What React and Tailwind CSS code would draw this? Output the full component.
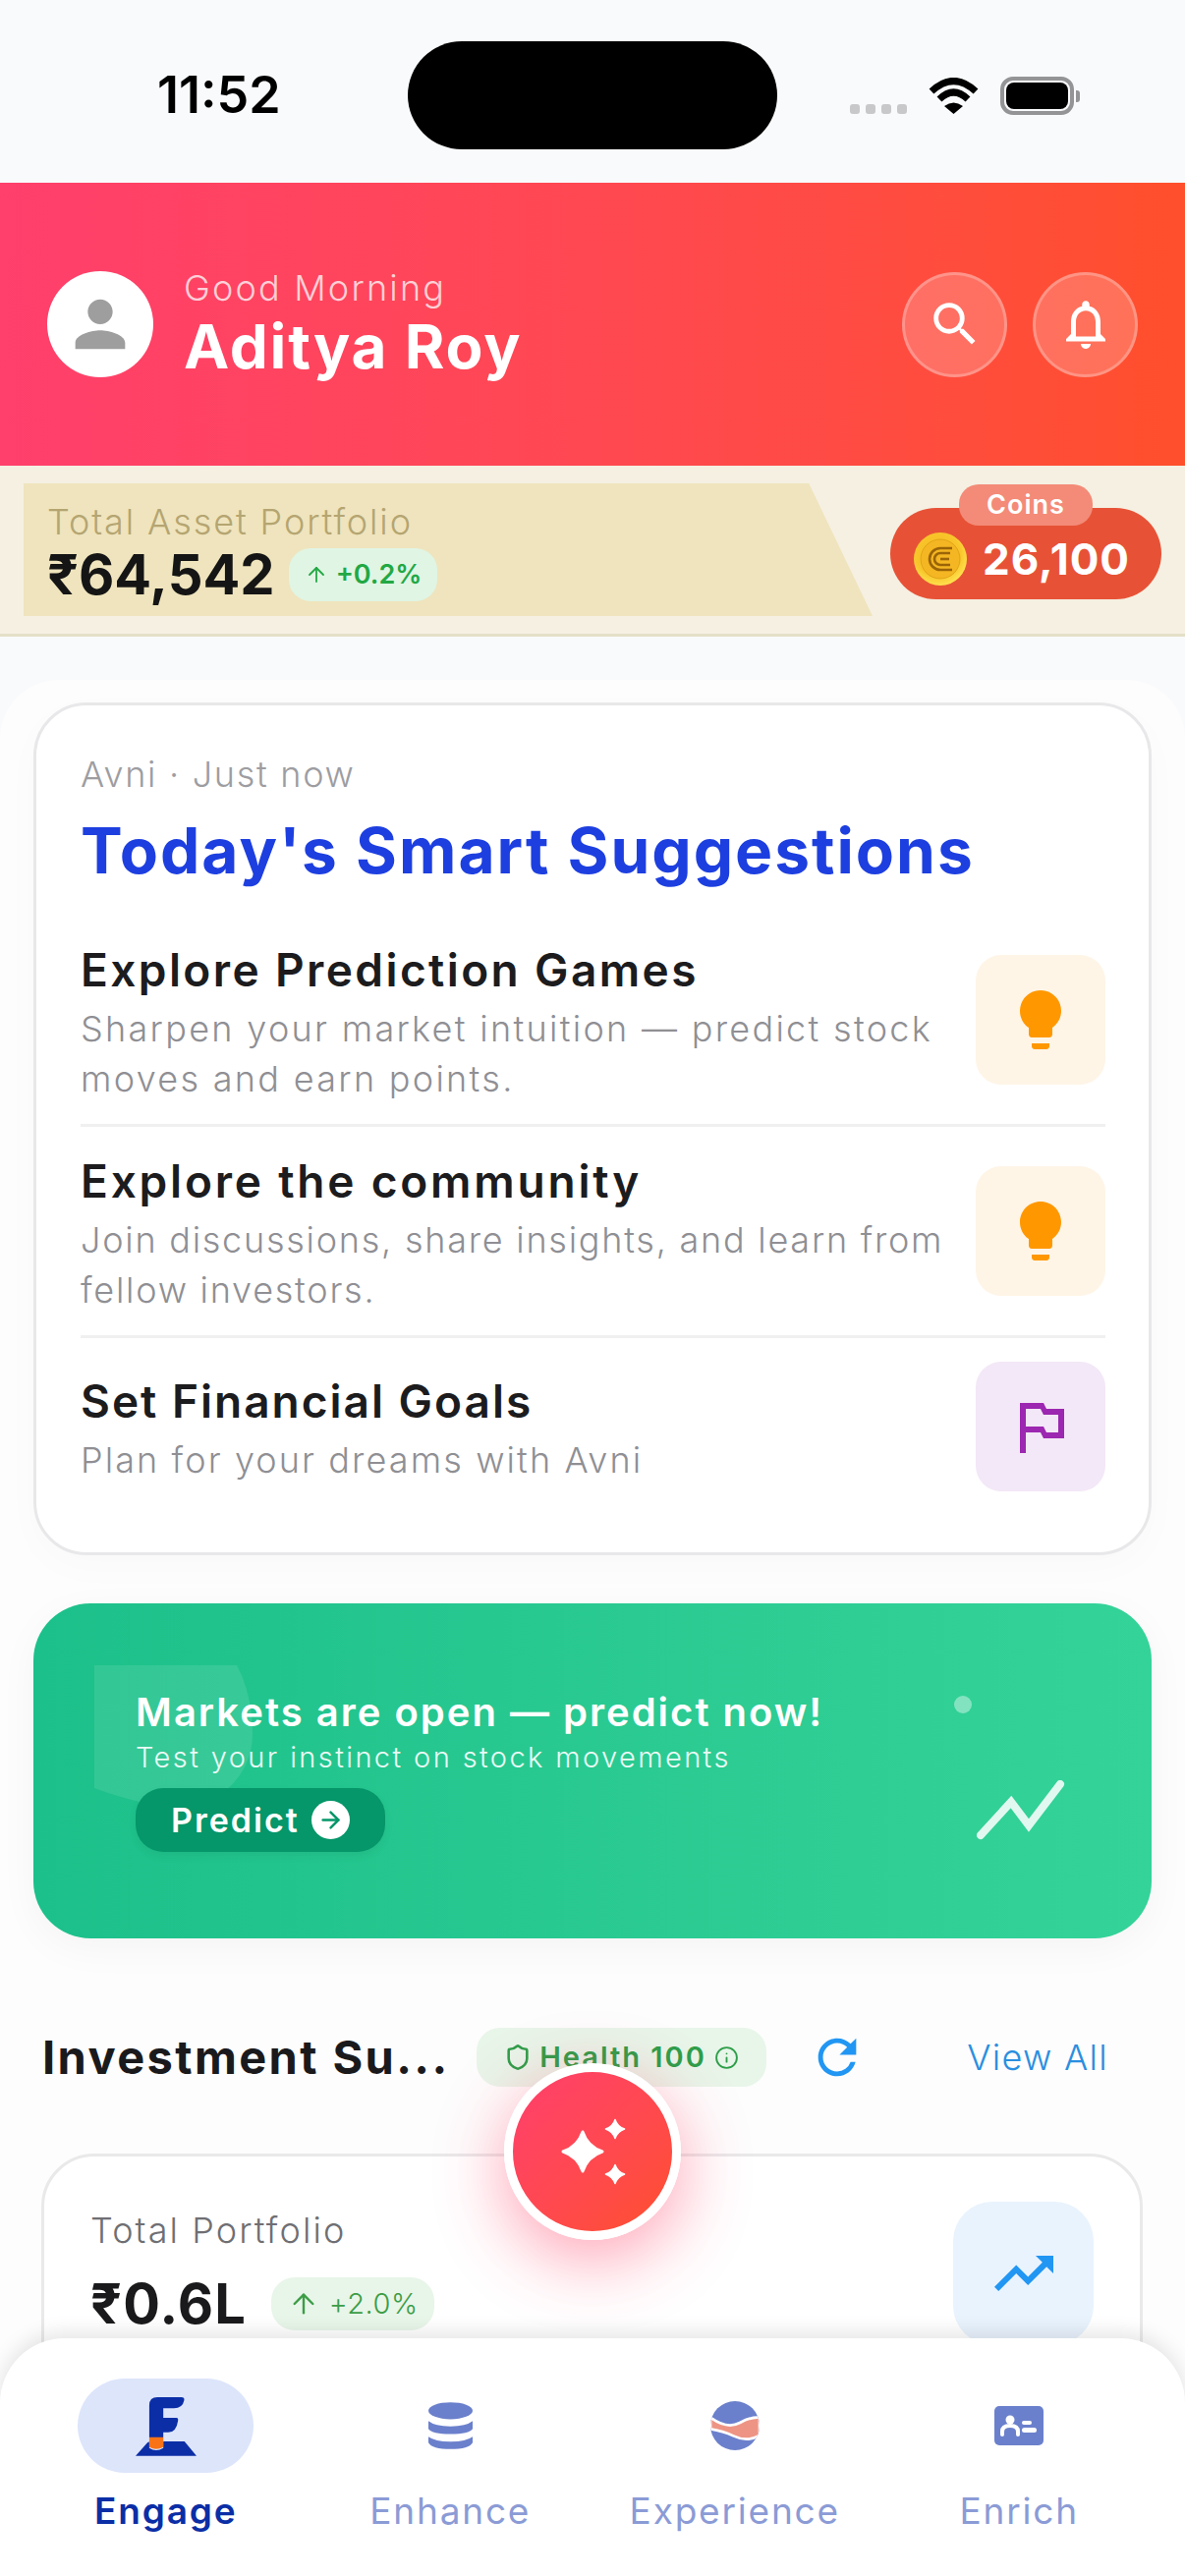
import { ArrowRight, ArrowUp, Info, Shield } from "lucide-react";
import {
  MdLightbulb,
  MdNotificationsNone,
  MdOutlinedFlag,
  MdPerson,
  MdRefresh,
  MdSearch,
  MdTrendingUp,
} from "react-icons/md";

function StatusBar() {
  return (
    <div className="flex h-[186px] items-start bg-[#f9fafc] pl-[160px] pt-[42px]">
      <span className="mt-[28px] w-[255px] text-[52px] font-semibold leading-[54px] tracking-[0px] text-black">11:52</span>
      <div className="h-[110px] w-[376px] rounded-[55px] bg-black" />
      <div className="ml-[74px] mt-[64px] flex gap-[6px]">
        {[0, 1, 2, 3].map((i) => (
          <div key={i} className="h-[10px] w-[10px] rounded-[3px] bg-[#c8c8ca]" />
        ))}
      </div>
      <svg width="51" height="37" viewBox="0 0 51 37" className="ml-[22px] mt-[37px]">
        <path d="M3 14 Q25.5 -7 48 14" fill="none" stroke="#000" strokeWidth="7" />
        <path d="M11 22 Q25.5 8 40 22" fill="none" stroke="#000" strokeWidth="7" />
        <path d="M16 29 Q25.5 22 35 29 L25.5 37Z" fill="#000" />
      </svg>
      <div className="ml-[22px] mt-[36px] flex items-center">
        <div className="h-[39px] w-[75px] rounded-[13px] border-[4px] border-[#949497] p-[2px]">
          <div className="h-full w-full rounded-[8px] bg-black" />
        </div>
        <div className="ml-[2px] h-[12px] w-[4px] rounded-r-[3px] bg-[#949497]" />
      </div>
    </div>
  );
}

function Header() {
  return (
    <div className="flex h-[288px] items-center bg-gradient-to-r from-[#ff3f6c] to-[#ff4f2b] px-[48px]">
      <div className="flex h-[108px] w-[108px] items-center justify-center rounded-full bg-white">
        <MdPerson size={76} color="#9e9e9e" />
      </div>
      <div className="ml-[31px] flex-1">
        <p className="text-[36px] font-light leading-[42px] tracking-[2.2px] text-white/75">Good Morning</p>
        <p className="mt-[4px] text-[62px] font-bold leading-[70px] tracking-[1.8px] text-white">Aditya Roy</p>
      </div>
      <div className="flex gap-[26px]">
        <div className="flex h-[107px] w-[107px] items-center justify-center rounded-full border-[3px] border-white/25 bg-white/20">
          <MdSearch size={58} color="#fff" />
        </div>
        <div className="flex h-[107px] w-[107px] items-center justify-center rounded-full border-[3px] border-white/25 bg-white/20">
          <MdNotificationsNone size={60} color="#fff" />
        </div>
      </div>
    </div>
  );
}

function Coin() {
  return (
    <svg width="54" height="54" viewBox="0 0 54 54">
      <defs>
        <radialGradient id="coinFill" cx="45%" cy="40%" r="60%">
          <stop offset="0%" stopColor="#f5b921" />
          <stop offset="70%" stopColor="#f8c52a" />
          <stop offset="100%" stopColor="#ffe14d" />
        </radialGradient>
      </defs>
      <circle cx="27" cy="27" r="27" fill="url(#coinFill)" />
      <circle cx="27" cy="27" r="20" fill="#f4b622" stroke="#d99a14" strokeWidth="0.7" />
      <path d="M39 16 H27 A11 11 0 0 0 27 38 H39" fill="none" stroke="#9a6408" strokeWidth="2.6" />
      <path d="M37 21 H27 A6 6 0 0 0 27 33 H37" fill="none" stroke="#9a6408" strokeWidth="2.6" />
      <path d="M27 27 H36" fill="none" stroke="#9a6408" strokeWidth="2.6" />
    </svg>
  );
}

function AssetBar() {
  return (
    <div className="flex h-[174px] items-start border-b-[3px] border-[#e4dfc8] bg-[#f5f0e2] pl-[24px]">
      <div className="mt-[18px] h-[135px] w-[864px] bg-[#efe4bd] pl-[24px] pt-[17px] [clip-path:polygon(0_0,92.5%_0,100%_100%,0_100%)]">
        <p className="text-[36px] font-light leading-[44px] tracking-[1.9px] text-[#b5a571]">Total Asset Portfolio</p>
        <div className="flex items-center">
          <span className="text-[56px] font-bold leading-[64px] tracking-[0px] text-[#151515]">₹64,542</span>
          <span className="ml-[14px] flex h-[54px] items-center gap-[8px] rounded-[22px] bg-[#e0f5e4] px-[16px] text-[27px] font-semibold text-[#22a844]">
            <ArrowUp size={24} strokeWidth={1.8} />
            +0.2%
          </span>
        </div>
      </div>
      <div className="relative ml-[18px] mt-[43px] flex h-[93px] w-[276px] items-center rounded-[47px] bg-[#e75236] pl-[24px] pt-[2px]">
        <div className="absolute left-[70px] top-[-24px] flex h-[42px] w-[136px] items-center justify-center rounded-[20px] bg-[#f38b78] text-[27px] font-semibold tracking-[1px] text-white">
          Coins
        </div>
        <div className="mt-[8px] flex items-center gap-[16px]">
          <Coin />
          <span className="text-[44px] font-bold tracking-[1px] text-white">26,100</span>
        </div>
      </div>
    </div>
  );
}

function Suggestion({ title, lines, iconBg, icon, boxClass, textClass, titleClass, linesClass }) {
  return (
    <div className={`flex justify-between ${boxClass}`}>
      <div className={textClass}>
        <p className={`text-[46px] font-semibold leading-[50px] text-[#1c1c1e] ${titleClass}`}>{title}</p>
        <div className={`mt-[10px] whitespace-nowrap text-[36px] font-light leading-[51px] text-[#8f8f94] ${linesClass}`}>
          {lines.map((l) => (
            <p key={l}>{l}</p>
          ))}
        </div>
      </div>
      <div className={`flex h-[132px] w-[132px] shrink-0 items-center justify-center rounded-[26px] ${iconBg}`}>{icon}</div>
    </div>
  );
}

function SuggestionsCard() {
  return (
    <div className="mx-[34px] mt-[23px] h-[868px] rounded-[54px] border-[3px] border-[#e8e8ea] bg-white pl-[45px] pr-[44px] pt-[48px] shadow-[0_12px_40px_rgba(0,0,0,0.02)]">
      <p className="text-[36px] font-light leading-[44px] tracking-[1.7px] text-[#9d9da1]">Avni · Just now</p>
      <h1 className="mt-[18px] whitespace-nowrap text-[64px] font-bold leading-[76px] tracking-[2px] text-[#1d3fe0]">Today's Smart Suggestions</h1>
      <div className="mt-[58px]">
        <Suggestion
          title="Explore Prediction Games"
          lines={["Sharpen your market intuition — predict stock", "moves and earn points."]}
          iconBg="mt-[10px] bg-[#fef5e7]"
          icon={<MdLightbulb size={72} color="#ff9800" />}
          boxClass="h-[185px] border-b-[3px] border-[#f0f0f1]"
          titleClass="tracking-[2.4px]"
          linesClass="tracking-[2.3px]"
        />
        <Suggestion
          title="Explore the community"
          lines={["Join discussions, share insights, and learn from", "fellow investors."]}
          iconBg="mt-[10px] bg-[#fef5e7]"
          icon={<MdLightbulb size={72} color="#ff9800" />}
          boxClass="h-[215px] border-b-[3px] border-[#f0f0f1] pt-[30px]"
          titleClass="tracking-[2.8px]"
          linesClass="tracking-[1.75px]"
        />
        <Suggestion
          title="Set Financial Goals"
          lines={["Plan for your dreams with Avni"]}
          iconBg="bg-[#f3e8f7]"
          icon={<MdOutlinedFlag size={72} color="#9c27b0" />}
          boxClass="pt-[24px]"
          textClass="mt-[15px]"
          titleClass="tracking-[2px]"
          linesClass="tracking-[2.1px]"
        />
      </div>
    </div>
  );
}

function PredictBanner() {
  return (
    <div className="relative mx-[34px] mt-[49px] h-[341px] overflow-hidden rounded-[58px] bg-gradient-to-r from-[#1cc08a] to-[#34d399] pl-[104px] pt-[86px] shadow-[0_10px_40px_rgba(0,0,0,0.04)]">
      <svg width="161" height="150" viewBox="0 0 161 150" className="absolute left-[62px] top-[63px]">
        <path d="M0 0 H145 Q161 30 161 70 Q161 120 100 150 Q40 140 0 125Z" fill="#fff" fillOpacity="0.1" />
      </svg>
      <div className="absolute left-[937px] top-[94px] h-[18px] w-[18px] rounded-full bg-white/40" />
      <svg width="92" height="62" viewBox="0 0 92 62" className="absolute left-[960px] top-[180px]">
        <path d="M4 56 L35 22 L53 46 L85 4" fill="none" stroke="#fff" strokeOpacity="0.85" strokeWidth="8" strokeLinecap="round" strokeLinejoin="miter" />
      </svg>
      <div className="relative">
        <p className="whitespace-nowrap text-[40px] font-semibold leading-[50px] tracking-[2px] text-white">Markets are open — predict now!</p>
        <p className="mt-[1px] whitespace-nowrap text-[29px] font-light leading-[40px] tracking-[2.4px] text-white/90">Test your instinct on stock movements</p>
        <button className="mt-[11px] flex h-[65px] w-[254px] items-center justify-between rounded-[28px] bg-[#059669] pl-[36px] pr-[36px] shadow-[0_4px_10px_rgba(0,0,0,0.06)]">
          <span className="text-[34px] font-semibold tracking-[2px] text-white">Predict</span>
          <span className="flex h-[39px] w-[39px] items-center justify-center rounded-full bg-white">
            <ArrowRight size={27} color="#059669" strokeWidth={2.2} />
          </span>
        </button>
      </div>
    </div>
  );
}

function InvestmentSummary() {
  return (
    <div>
      <div className="mt-[91px] flex h-[60px] items-center pl-[43px]">
        <span className="w-[412px] whitespace-nowrap text-[47px] font-bold tracking-[2.4px] text-[#1a1a1c]">Investment Su...</span>
        <div className="ml-[30px] flex h-[60px] w-[295px] items-center justify-center gap-[8px] rounded-[24px] bg-[#e8f5e9]">
          <Shield size={28} color="#2e9e4a" strokeWidth={2.2} />
          <span className="whitespace-nowrap text-[29px] font-semibold tracking-[2px] text-[#2e9e4a]">Health 100</span>
          <Info size={25} color="#2e9e4a" strokeWidth={1.8} />
        </div>
        <MdRefresh size={58} color="#2196f3" className="ml-[43px]" />
        <span className="ml-auto mr-[78px] text-[36px] font-light tracking-[1.3px] text-[#2a8fe0]">View All</span>
      </div>
      <div className="ml-[42px] mr-[43px] mt-[68px] flex h-[320px] justify-between rounded-[54px] border-[3px] border-[#e9e9ea] bg-white pl-[47px] pr-[47px] pt-[46px]">
        <div className="mt-[7px]">
          <p className="text-[36px] font-light leading-[44px] tracking-[2.1px] text-[#6f6f73]">Total Portfolio</p>
          <div className="mt-[21px] flex h-[64px] items-center">
            <span className="text-[56px] font-bold tracking-[1.2px] text-[#1a1a1c]">₹0.6L</span>
            <span className="ml-[25px] flex h-[54px] w-[166px] items-center justify-center gap-[10px] rounded-[24px] bg-[#e8f5e9] text-[29px] font-light tracking-[0.5px] text-[#3c9d46]">
              <ArrowUp size={32} strokeWidth={1.8} />
              +2.0%
            </span>
          </div>
        </div>
        <div className="flex h-[146px] w-[143px] items-center justify-center rounded-[40px] bg-[#e9f3fd]">
          <MdTrendingUp size={72} color="#2196f3" />
        </div>
      </div>
    </div>
  );
}

function SparkleButton() {
  const star = "M0 -20 Q5 -5 20 0 Q5 5 0 20 Q-5 5 -20 0 Q-5 -5 0 -20Z";
  return (
    <div className="absolute left-[513px] top-[2100px] flex h-[180px] w-[180px] items-center justify-center rounded-full border-[9px] border-white bg-gradient-to-br from-[#ff3f6c] to-[#ff4f2b] shadow-[0_20px_70px_rgba(255,50,90,0.45)]">
      <svg width="90" height="90" viewBox="0 0 90 90" fill="#fff" stroke="#fff" strokeWidth="3" strokeLinejoin="round">
        <path d={star} transform="translate(35 45)" />
        <path d={star} transform="translate(68 22) scale(0.48)" />
        <path d={star} transform="translate(68 68) scale(0.48)" />
      </svg>
    </div>
  );
}

function EngageIcon() {
  return (
    <svg width="62" height="61" viewBox="0 0 187 182">
      <path d="M42 27 Q42 2 67 2 L140 2 Q151 2 149 12 Q144 36 118 36 L85 36 L85 65 L125 65 Q132 65 130 75 Q125 110 100 110 L85 110 L85 126 L42 126Z" fill="#0b2ea6" />
      <path d="M0 182 L35 143 Q38 139 42 139 L42 158 Q63 172 85 158 L85 138 L150 138 L187 182Z" fill="#0b2ea6" />
      <path d="M42 125 L85 125 L85 155 Q63 167 42 155Z" fill="#f97316" />
    </svg>
  );
}

function EnhanceIcon() {
  return (
    <svg width="45" height="48" viewBox="0 0 136 144" fill="#6b80cc">
      <ellipse cx="68" cy="26" rx="68" ry="26" />
      <path d="M0 58 Q20 74 68 74 Q116 74 136 58 L136 82 Q125 98 68 98 Q11 98 0 82Z" />
      <path d="M0 106 Q20 121 68 121 Q116 121 136 106 L136 124 Q125 144 68 144 Q11 144 0 124Z" />
    </svg>
  );
}

function ExperienceIcon() {
  return (
    <svg width="50" height="50" viewBox="0 0 150 150">
      <defs>
        <clipPath id="globeClip">
          <circle cx="75" cy="75" r="75" />
        </clipPath>
      </defs>
      <g clipPath="url(#globeClip)">
        <rect width="150" height="150" fill="#6b80cc" />
        <path d="M0 50 C30 72 60 82 90 66 C110 55 130 48 150 50 L150 105 C120 122 95 118 70 106 C45 94 20 88 0 85Z" fill="#ee9484" stroke="#fff" strokeWidth="8" />
      </g>
    </svg>
  );
}

function EnrichIcon() {
  return (
    <svg width="50" height="40" viewBox="0 0 50 40">
      <rect width="50" height="40" rx="5" fill="#6b80cc" />
      <circle cx="16" cy="14" r="4.5" fill="#fff" />
      <path d="M8 29 V26 Q8 20 16 20 Q24 20 24 26 V29" fill="none" stroke="#fff" strokeWidth="4" strokeLinecap="round" />
      <rect x="28" y="15" width="10" height="4" rx="2" fill="#fff" />
      <rect x="28" y="22" width="15" height="5" rx="2.5" fill="#fff" />
    </svg>
  );
}

const tabs = [
  { label: "Engage", icon: <EngageIcon />, active: true },
  { label: "Enhance", icon: <EnhanceIcon /> },
  { label: "Experience", icon: <ExperienceIcon /> },
  { label: "Enrich", icon: <EnrichIcon /> },
];

function BottomNav() {
  return (
    <div className="absolute bottom-0 left-0 right-0 grid h-[242px] grid-cols-4 rounded-t-[66px] bg-white px-[24px] pt-[41px] shadow-[0_-6px_20px_rgba(0,0,0,0.1)]">
      {tabs.map((tab) => (
        <div key={tab.label} className="flex flex-col items-center">
          <div className={`flex h-[96px] w-[179px] items-center justify-center rounded-[48px] ${tab.active ? "bg-[#dde5fb]" : ""}`}>{tab.icon}</div>
          <span
            className={`mt-[15px] text-[37px] leading-[48px] tracking-[1.8px] ${
              tab.active ? "font-semibold text-[#0b2ea6]" : "font-normal text-[#8b9bd6]"
            }`}
          >
            {tab.label}
          </span>
        </div>
      ))}
    </div>
  );
}

export default function App() {
  return (
    <div className="relative h-[2622px] w-[1206px] overflow-hidden bg-[#f9fafc] font-['Inter',sans-serif]">
      <StatusBar />
      <Header />
      <AssetBar />
      <div className="mt-[44px] h-[1930px] rounded-t-[60px] bg-[#fdfdfd] pt-[0.1px]">
        <SuggestionsCard />
        <PredictBanner />
        <InvestmentSummary />
      </div>
      <SparkleButton />
      <BottomNav />
    </div>
  );
}
